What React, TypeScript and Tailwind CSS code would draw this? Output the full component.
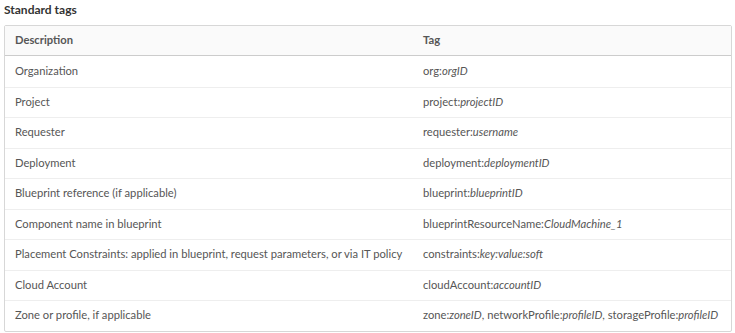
const rows: { desc: string; tag: [string, boolean][] }[] = [
  { desc: "Organization", tag: [["org:", false], ["orgID", true]] },
  { desc: "Project", tag: [["project:", false], ["projectID", true]] },
  { desc: "Requester", tag: [["requester:", false], ["username", true]] },
  { desc: "Deployment", tag: [["deployment:", false], ["deploymentID", true]] },
  { desc: "Blueprint reference (if applicable)", tag: [["blueprint:", false], ["blueprintID", true]] },
  {
    desc: "Component name in blueprint",
    tag: [["blueprintResourceName:", false], ["CloudMachine_1", true]],
  },
  {
    desc: "Placement Constraints: applied in blueprint, request parameters, or via IT policy",
    tag: [["constraints:", false], ["key:value:soft", true]],
  },
  { desc: "Cloud Account", tag: [["cloudAccount:", false], ["accountID", true]] },
  {
    desc: "Zone or profile, if applicable",
    tag: [
      ["zone:", false],
      ["zoneID", true],
      [", networkProfile:", false],
      ["profileID", true],
      [", storageProfile:", false],
      ["profileID", true],
    ],
  },
];

const App = () => {
  return (
    <div
      className="w-[735px] h-[333px] bg-white text-[#565656] overflow-hidden"
      style={{ fontFamily: "Lato, 'Open Sans', sans-serif" }}
    >
      <h3 className="pl-[4px] pt-[1px] h-[25px] text-[12px] font-bold text-[#333]">Standard tags</h3>
      <div className="ml-[4px] w-[728px] border border-[#d7d7d7] rounded-[2px] text-[11.2px]">
        <div className="flex items-center h-[30px] bg-[#fafafa] border-b border-[#cccccc] font-bold">
          <div className="w-[409px] pl-[10px]">Description</div>
          <div className="flex-1 pl-[9px]">Tag</div>
        </div>
        {rows.map((row, i) => (
          <div
            key={i}
            className={`flex items-center h-[30.5px] ${i > 0 ? "border-t border-[#eeeeee]" : ""}`}
          >
            <div className="w-[409px] pl-[10px] whitespace-nowrap">{row.desc}</div>
            <div className="flex-1 pl-[9px] whitespace-nowrap">
              {row.tag.map(([t, it], j) => (
                <span key={j} className={it ? "italic" : ""}>
                  {t}
                </span>
              ))}
            </div>
          </div>
        ))}
      </div>
    </div>
  );
};

export default App;
